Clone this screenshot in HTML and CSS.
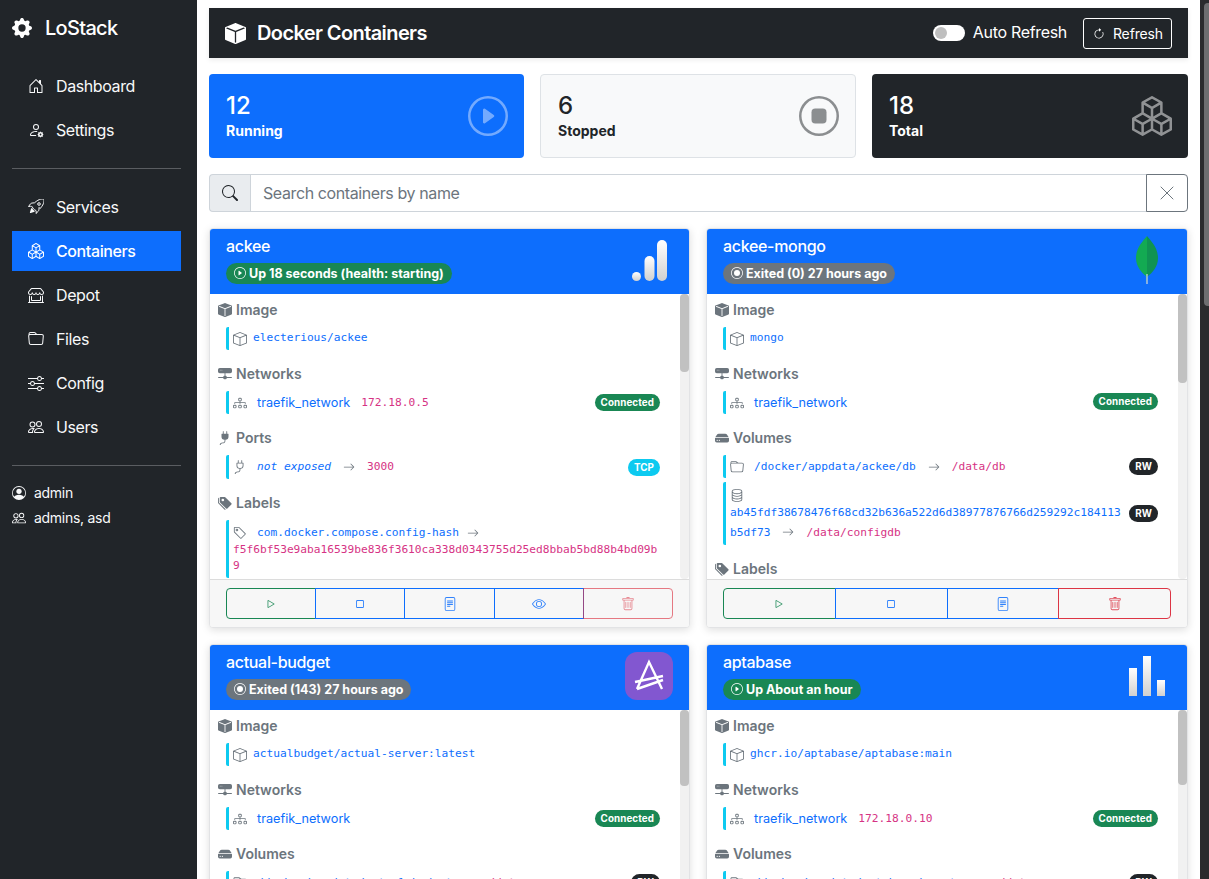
FILE: index.html
```html
<!DOCTYPE html>
<html lang="en">
<head>
<meta charset="utf-8">
<title>LoStack - Docker Containers</title>
<link rel="stylesheet" href="styles.css">
</head>
<body>
<svg class="defs" width="0" height="0" aria-hidden="true">
<defs>
<symbol id="i-box" viewBox="0 0 16 16"><path fill="currentColor" d="M8.186 1.113a.5.5 0 0 0-.372 0L1.846 3.5 8 5.961 14.154 3.5 8.186 1.113zM15 4.239l-6.5 2.6v7.922l6.5-2.6V4.24zM7.5 14.762V6.838L1 4.239v7.925l6.5 2.6zM7.443.184a1.5 1.5 0 0 1 1.114 0l7.129 2.852A.5.5 0 0 1 16 3.5v8.662a1 1 0 0 1-.629.928l-7.185 2.874a.5.5 0 0 1-.372 0L.63 13.09a1 1 0 0 1-.63-.928V3.5a.5.5 0 0 1 .314-.464L7.443.184z"/></symbol>
<symbol id="i-boxfill" viewBox="0 0 16 16"><path fill="currentColor" d="M15.528 2.973a.75.75 0 0 1 .472.696v8.662a.75.75 0 0 1-.472.696l-7.25 2.9a.75.75 0 0 1-.557 0l-7.25-2.9A.75.75 0 0 1 0 12.331V3.669a.75.75 0 0 1 .471-.696L7.443.184l.004-.001.274-.11a.75.75 0 0 1 .558 0l.274.11.004.001 6.971 2.789zm-1.374.527L8 5.962 1.846 3.5 1 3.839v.4l6.5 2.6v7.922l.5.2.5-.2V6.84l6.5-2.6v-.4l-.846-.339z"/></symbol>
<symbol id="i-boxes" viewBox="0 0 16 16"><path fill="currentColor" d="M7.752.066a.5.5 0 0 1 .496 0l3.75 2.143a.5.5 0 0 1 .252.434v3.995l3.498 2A.5.5 0 0 1 16 9.07v4.286a.5.5 0 0 1-.252.434l-3.75 2.143a.5.5 0 0 1-.496 0l-3.502-2-3.502 2.001a.5.5 0 0 1-.496 0l-3.75-2.143A.5.5 0 0 1 0 13.357V9.071a.5.5 0 0 1 .252-.434L3.75 6.638V2.643a.5.5 0 0 1 .252-.434L7.752.066ZM4.25 7.504 1.508 9.071l2.742 1.567 2.742-1.567L4.25 7.504ZM7.5 9.933l-2.75 1.571v3.134l2.75-1.571V9.933Zm1 3.134 2.75 1.571v-3.134L8.5 9.933v3.134Zm.508-3.996 2.742 1.567 2.742-1.567-2.742-1.567-2.742 1.567Zm2.242-2.433V3.504L8.5 5.076V8.21l2.75-1.572ZM7.5 8.21V5.076L4.75 3.504v3.134L7.5 8.21ZM5.258 2.643 8 4.21l2.742-1.567L8 1.076 5.258 2.643ZM15 9.933l-2.75 1.571v3.134L15 13.067V9.933ZM3.75 14.638v-3.134L1 9.933v3.134l2.75 1.571Z"/></symbol>
<symbol id="i-home" viewBox="0 0 16 16"><path fill="currentColor" d="M8.354 1.146a.5.5 0 0 0-.708 0l-6 6A.5.5 0 0 0 1.5 7.5v7a.5.5 0 0 0 .5.5h4.5a.5.5 0 0 0 .5-.5v-4h2v4a.5.5 0 0 0 .5.5H14a.5.5 0 0 0 .5-.5v-7a.5.5 0 0 0-.146-.354L13 5.793V2.5a.5.5 0 0 0-.5-.5h-1a.5.5 0 0 0-.5.5v1.293L8.354 1.146zM2.5 14V7.707l5.5-5.5 5.5 5.5V14H10v-4a.5.5 0 0 0-.5-.5h-3a.5.5 0 0 0-.5.5v4H2.5z"/></symbol>
<symbol id="i-usergear" viewBox="0 0 16 16"><path fill="currentColor" d="M11 5a3 3 0 1 1-6 0 3 3 0 0 1 6 0ZM8 7a2 2 0 1 0 0-4 2 2 0 0 0 0 4Zm.256 7a4.474 4.474 0 0 1-.229-1.004H3c.001-.246.154-.986.832-1.664C4.484 10.68 5.711 10 8 10c.26 0 .507.009.74.025.226-.341.496-.65.804-.918C9.077 9.038 8.564 9 8 9c-5 0-6 3-6 4s1 1 1 1h5.256Z"/><circle cx="12.5" cy="12.5" r="1.7" fill="none" stroke="currentColor" stroke-width="1.6"/><path stroke="currentColor" stroke-width="1" d="M12.5 9.7v1.2M12.5 14.1v1.2M9.7 12.5h1.2M14.1 12.5h1.2M10.5 10.5l.8.8M13.7 13.7l.8.8M14.5 10.5l-.8.8M11.3 13.7l-.8.8"/></symbol>
<symbol id="i-rocket" viewBox="0 0 16 16"><path fill="none" stroke="currentColor" stroke-width="1" stroke-linejoin="round" d="M12.17 9.53c2.307-2.592 3.278-4.684 3.641-6.218.21-.887.214-1.58.16-2.065a3.578 3.578 0 0 0-.186-.793c-.073-.164-.168-.234-.352-.295a3.797 3.797 0 0 0-.73-.138c-.49-.044-1.19-.03-2.08.188-1.536.374-3.618 1.343-6.161 3.604l-2.4.238a2.552 2.552 0 0 0-1.53.734L.5 7.5l2-.2c.28-.04.592.013.955.132.232.076.437.16.858.331.196.816.66 1.58 1.275 2.195.613.614 1.376 1.08 2.273 1.479.089.218.173.424.249.657.118.363.172.676.132.956L8 14.5l2.144-2.099c.41-.41.668-.949.732-1.526l.24-2.408Z"/><circle cx="11" cy="5" r="1.3" fill="none" stroke="currentColor"/><path fill="currentColor" d="M5.205 10.787a7.632 7.632 0 0 0 1.804 1.352c-1.118 1.007-4.929 2.028-5.054 1.903-.126-.127.737-4.189 1.839-5.18.346.69.837 1.35 1.411 1.925Z"/></symbol>
<symbol id="i-shop" viewBox="0 0 16 16"><path fill="currentColor" d="M2.97 1.35A1 1 0 0 1 3.73 1h8.54a1 1 0 0 1 .76.35l2.609 3.044A1.5 1.5 0 0 1 16 5.37v.255a2.375 2.375 0 0 1-4.25 1.458A2.371 2.371 0 0 1 9.875 8 2.37 2.37 0 0 1 8 7.083 2.37 2.37 0 0 1 6.125 8a2.37 2.37 0 0 1-1.875-.917A2.375 2.375 0 0 1 0 5.625V5.37a1.5 1.5 0 0 1 .361-.976l2.61-3.045zm1.78 4.275a1.375 1.375 0 0 0 2.75 0 .5.5 0 0 1 1 0 1.375 1.375 0 0 0 2.75 0 .5.5 0 0 1 1 0 1.375 1.375 0 1 0 2.75 0V5.37a.5.5 0 0 0-.12-.325L12.27 2H3.73L1.12 5.045A.5.5 0 0 0 1 5.37v.255a1.375 1.375 0 0 0 2.75 0 .5.5 0 0 1 1 0zM1.5 8.5A.5.5 0 0 1 2 9v6h12V9a.5.5 0 0 1 1 0v6h.5a.5.5 0 0 1 0 1H.5a.5.5 0 0 1 0-1H1V9a.5.5 0 0 1 .5-.5zm2 .5a.5.5 0 0 1 .5.5V13h8V9.5a.5.5 0 0 1 1 0V13a1 1 0 0 1-1 1H4a1 1 0 0 1-1-1V9.5a.5.5 0 0 1 .5-.5z"/></symbol>
<symbol id="i-folder" viewBox="0 0 16 16"><path fill="currentColor" d="M.54 3.87.5 3a2 2 0 0 1 2-2h3.672a2 2 0 0 1 1.414.586l.828.828A2 2 0 0 0 9.828 3h3.982a2 2 0 0 1 1.992 2.181l-.637 7A2 2 0 0 1 13.174 14H2.826a2 2 0 0 1-1.991-1.819l-.637-7a1.99 1.99 0 0 1 .342-1.31zM2.19 4a1 1 0 0 0-.996 1.09l.637 7a1 1 0 0 0 .995.91h10.348a1 1 0 0 0 .995-.91l.637-7A1 1 0 0 0 13.81 4H2.19zm4.69-1.707A1 1 0 0 0 6.172 2H2.5a1 1 0 0 0-1 .981l.006.139C1.72 3.042 1.95 3 2.19 3h5.396l-.707-.707z"/></symbol>
<symbol id="i-sliders" viewBox="0 0 16 16"><path fill="currentColor" fill-rule="evenodd" d="M11.5 2a1.5 1.5 0 1 0 0 3 1.5 1.5 0 0 0 0-3zM9.05 3a2.5 2.5 0 0 1 4.9 0H16v1h-2.05a2.5 2.5 0 0 1-4.9 0H0V3h9.05zM4.5 7a1.5 1.5 0 1 0 0 3 1.5 1.5 0 0 0 0-3zM2.05 8a2.5 2.5 0 0 1 4.9 0H16v1H6.95a2.5 2.5 0 0 1-4.9 0H0V8h2.05zm9.45 4a1.5 1.5 0 1 0 0 3 1.5 1.5 0 0 0 0-3zm-2.45 1a2.5 2.5 0 0 1 4.9 0H16v1h-2.05a2.5 2.5 0 0 1-4.9 0H0v-1h9.05z"/></symbol>
<symbol id="i-people" viewBox="0 0 16 16"><path fill="currentColor" d="M15 14s1 0 1-1-1-4-5-4-5 3-5 4 1 1 1 1h8Zm-7.978-1A.261.261 0 0 1 7 12.996c.001-.264.167-1.03.76-1.72C8.312 10.629 9.282 10 11 10c1.717 0 2.687.63 3.24 1.276.593.69.758 1.457.76 1.72l-.008.002a.274.274 0 0 1-.014.002H7.022ZM11 7a2 2 0 1 0 0-4 2 2 0 0 0 0 4Zm3-2a3 3 0 1 1-6 0 3 3 0 0 1 6 0ZM6.936 9.28a5.88 5.88 0 0 0-1.23-.247A7.35 7.35 0 0 0 5 9c-4 0-5 3-5 4 0 .667.333 1 1 1h4.216A2.238 2.238 0 0 1 5 13c0-1.01.377-2.042 1.09-2.904.243-.294.526-.569.846-.816ZM4.92 10A5.493 5.493 0 0 0 4 13H1c0-.26.164-1.03.76-1.724.545-.636 1.492-1.256 3.16-1.275ZM1.5 5.5a3 3 0 1 1 6 0 3 3 0 0 1-6 0Zm3-2a2 2 0 1 0 0 4 2 2 0 0 0 0-4Z"/></symbol>
<symbol id="i-usercircle" viewBox="0 0 16 16"><path fill="currentColor" d="M11 6a3 3 0 1 1-6 0 3 3 0 0 1 6 0z"/><path fill="currentColor" fill-rule="evenodd" d="M0 8a8 8 0 1 1 16 0A8 8 0 0 1 0 8zm8-7a7 7 0 0 0-5.468 11.37C3.242 11.226 4.805 10 8 10s4.757 1.225 5.468 2.37A7 7 0 0 0 8 1z"/></symbol>
<symbol id="i-gear" viewBox="0 0 16 16"><path fill="currentColor" d="M9.405 1.05c-.413-1.4-2.397-1.4-2.81 0l-.1.34a1.464 1.464 0 0 1-2.105.872l-.31-.17c-1.283-.698-2.686.705-1.987 1.987l.169.311c.446.82.023 1.841-.872 2.105l-.34.1c-1.4.413-1.4 2.397 0 2.81l.34.1a1.464 1.464 0 0 1 .872 2.105l-.17.31c-.698 1.283.705 2.686 1.987 1.987l.311-.169a1.464 1.464 0 0 1 2.105.872l.1.34c.413 1.4 2.397 1.4 2.81 0l.1-.34a1.464 1.464 0 0 1 2.105-.872l.31.17c1.283.698 2.686-.705 1.987-1.987l-.169-.311a1.464 1.464 0 0 1 .872-2.105l.34-.1c1.4-.413 1.4-2.397 0-2.81l-.34-.1a1.464 1.464 0 0 1-.872-2.105l.17-.31c.698-1.283-.705-2.686-1.987-1.987l-.311.169a1.464 1.464 0 0 1-2.105-.872l-.1-.34zM8 10.93a2.929 2.929 0 1 1 0-5.86 2.929 2.929 0 0 1 0 5.858z"/></symbol>
<symbol id="i-play" viewBox="0 0 16 16"><path fill="currentColor" d="M8 15A7 7 0 1 1 8 1a7 7 0 0 1 0 14zm0 1A8 8 0 1 0 8 0a8 8 0 0 0 0 16z"/><path fill="currentColor" d="M6.271 5.055a.5.5 0 0 1 .52.038l3.5 2.5a.5.5 0 0 1 0 .814l-3.5 2.5A.5.5 0 0 1 6 10.5v-5a.5.5 0 0 1 .271-.445z"/></symbol>
<symbol id="i-stop" viewBox="0 0 16 16"><path fill="currentColor" d="M8 15A7 7 0 1 1 8 1a7 7 0 0 1 0 14zm0 1A8 8 0 1 0 8 0a8 8 0 0 0 0 16z"/><path fill="currentColor" d="M5 6.5A1.5 1.5 0 0 1 6.5 5h3A1.5 1.5 0 0 1 11 6.5v3A1.5 1.5 0 0 1 9.5 11h-3A1.5 1.5 0 0 1 5 9.5v-3z"/></symbol>
<symbol id="i-record" viewBox="0 0 16 16"><path fill="currentColor" d="M8 15A7 7 0 1 1 8 1a7 7 0 0 1 0 14zm0 1A8 8 0 1 0 8 0a8 8 0 0 0 0 16z"/><circle fill="currentColor" cx="8" cy="8" r="4"/></symbol>
<symbol id="i-refresh" viewBox="0 0 16 16"><path fill="currentColor" fill-rule="evenodd" d="M8 3a5 5 0 1 0 4.546 2.914.5.5 0 0 1 .908-.417A6 6 0 1 1 8 2v1z"/><path fill="currentColor" d="M8 4.466V.534a.25.25 0 0 1 .41-.192l2.36 1.966c.12.1.12.284 0 .384L8.41 4.658A.25.25 0 0 1 8 4.466z"/></symbol>
<symbol id="i-search" viewBox="0 0 16 16"><path fill="currentColor" d="M11.742 10.344a6.5 6.5 0 1 0-1.397 1.398h-.001c.03.04.062.078.098.115l3.85 3.85a1 1 0 0 0 1.415-1.414l-3.85-3.85a1.007 1.007 0 0 0-.115-.1zM12 6.5a5.5 5.5 0 1 1-11 0 5.5 5.5 0 0 1 11 0z"/></symbol>
<symbol id="i-x" viewBox="0 0 16 16"><path fill="none" stroke="currentColor" stroke-width="1" stroke-linecap="round" d="M2 2l12 12M14 2 2 14"/></symbol>
<symbol id="i-hdd" viewBox="0 0 16 16"><path fill="currentColor" d="M2 1a2 2 0 0 0-2 2v2a2 2 0 0 0 2 2h5.5v3A1.5 1.5 0 0 0 6 11.5H.5a.5.5 0 0 0 0 1H6A1.5 1.5 0 0 0 7.5 14h1a1.5 1.5 0 0 0 1.5-1.5h5.5a.5.5 0 0 0 0-1H10A1.5 1.5 0 0 0 8.5 10V7H14a2 2 0 0 0 2-2V3a2 2 0 0 0-2-2H2zm.5 3a.5.5 0 1 1 0-1 .5.5 0 0 1 0 1zm2 0a.5.5 0 1 1 0-1 .5.5 0 0 1 0 1z"/></symbol>
<symbol id="i-stack" viewBox="0 0 16 16"><path fill="currentColor" fill-rule="evenodd" d="M4.2 3h7.6c.6 0 1.2.3 1.6.8L15.7 7H.3l2.3-3.2c.4-.5 1-.8 1.6-.8zM.5 8h15c.3 0 .5.2.5.5V11a2 2 0 0 1-2 2H2a2 2 0 0 1-2-2V8.5C0 8.2.2 8 .5 8zm2 2a.7.7 0 1 0 0 1.4.7.7 0 0 0 0-1.4zm2.5 0a.7.7 0 1 0 0 1.4.7.7 0 0 0 0-1.4z"/></symbol>
<symbol id="i-diagram" viewBox="0 0 16 16"><path fill="currentColor" fill-rule="evenodd" d="M6 3.5A1.5 1.5 0 0 1 7.5 2h1A1.5 1.5 0 0 1 10 3.5v1A1.5 1.5 0 0 1 8.5 6v1H14a.5.5 0 0 1 .5.5v1a.5.5 0 0 1-1 0V8h-5v.5a.5.5 0 0 1-1 0V8h-5v.5a.5.5 0 0 1-1 0v-1A.5.5 0 0 1 2 7h5.5V6A1.5 1.5 0 0 1 6 4.5v-1zM8.5 5a.5.5 0 0 0 .5-.5v-1a.5.5 0 0 0-.5-.5h-1a.5.5 0 0 0-.5.5v1a.5.5 0 0 0 .5.5h1zM0 11.5A1.5 1.5 0 0 1 1.5 10h1A1.5 1.5 0 0 1 4 11.5v1A1.5 1.5 0 0 1 2.5 14h-1A1.5 1.5 0 0 1 0 12.5v-1zm1.5-.5a.5.5 0 0 0-.5.5v1a.5.5 0 0 0 .5.5h1a.5.5 0 0 0 .5-.5v-1a.5.5 0 0 0-.5-.5h-1zm4.5.5A1.5 1.5 0 0 1 7.5 10h1a1.5 1.5 0 0 1 1.5 1.5v1A1.5 1.5 0 0 1 8.5 14h-1A1.5 1.5 0 0 1 6 12.5v-1zm1.5-.5a.5.5 0 0 0-.5.5v1a.5.5 0 0 0 .5.5h1a.5.5 0 0 0 .5-.5v-1a.5.5 0 0 0-.5-.5h-1zm4.5.5a1.5 1.5 0 0 1 1.5-1.5h1a1.5 1.5 0 0 1 1.5 1.5v1a1.5 1.5 0 0 1-1.5 1.5h-1a1.5 1.5 0 0 1-1.5-1.5v-1zm1.5-.5a.5.5 0 0 0-.5.5v1a.5.5 0 0 0 .5.5h1a.5.5 0 0 0 .5-.5v-1a.5.5 0 0 0-.5-.5h-1z"/></symbol>
<symbol id="i-plugfill" viewBox="0 0 16 16"><path fill="currentColor" d="M6 0a.5.5 0 0 1 .5.5V3h3V.5a.5.5 0 0 1 1 0V3h1a.5.5 0 0 1 .5.5v3A3.5 3.5 0 0 1 8.5 10c-.002.434-.01.845-.04 1.22-.041.514-.126 1.003-.317 1.424a2.083 2.083 0 0 1-.97 1.028C6.725 13.9 6.169 14 5.5 14c-.998 0-1.61.33-1.974.718A1.922 1.922 0 0 0 3 16H2c0-.616.232-1.367.797-1.968C3.374 13.42 4.261 13 5.5 13c.581 0 .962-.088 1.218-.219.241-.123.4-.3.514-.55.121-.266.193-.621.23-1.09.027-.34.035-.718.037-1.141A3.5 3.5 0 0 1 4 6.5v-3a.5.5 0 0 1 .5-.5h1V.5A.5.5 0 0 1 6 0z"/></symbol>
<symbol id="i-plug" viewBox="0 0 16 16"><path fill="currentColor" fill-rule="evenodd" d="M6 0a.5.5 0 0 1 .5.5V3h3V.5a.5.5 0 0 1 1 0V3h1a.5.5 0 0 1 .5.5v3A3.5 3.5 0 0 1 8.5 10c-.002.434-.01.845-.04 1.22-.041.514-.126 1.003-.317 1.424a2.083 2.083 0 0 1-.97 1.028C6.725 13.9 6.169 14 5.5 14c-.998 0-1.61.33-1.974.718A1.922 1.922 0 0 0 3 16H2c0-.616.232-1.367.797-1.968C3.374 13.42 4.261 13 5.5 13c.581 0 .962-.088 1.218-.219.241-.123.4-.3.514-.55.121-.266.193-.621.23-1.09.027-.34.035-.718.037-1.141A3.5 3.5 0 0 1 4 6.5v-3a.5.5 0 0 1 .5-.5h1V.5A.5.5 0 0 1 6 0zM5 4v2.5A2.5 2.5 0 0 0 7.5 9h1A2.5 2.5 0 0 0 11 6.5V4H5z"/></symbol>
<symbol id="i-tagsfill" viewBox="0 0 16 16"><path fill="currentColor" d="M2 2a1 1 0 0 1 1-1h4.586a1 1 0 0 1 .707.293l7 7a1 1 0 0 1 0 1.414l-4.586 4.586a1 1 0 0 1-1.414 0l-7-7A1 1 0 0 1 2 6.586V2zm3.5 4a1.5 1.5 0 1 0 0-3 1.5 1.5 0 0 0 0 3z"/><path fill="currentColor" d="M1.293 7.793A1 1 0 0 1 1 7.086V2a1 1 0 0 0-1 1v4.586a1 1 0 0 0 .293.707l7 7a1 1 0 0 0 1.414 0l.043-.043-7.457-7.457z"/></symbol>
<symbol id="i-tag" viewBox="0 0 16 16"><path fill="currentColor" d="M6 4.5a1.5 1.5 0 1 1-3 0 1.5 1.5 0 0 1 3 0zm-1 0a.5.5 0 1 0-1 0 .5.5 0 0 0 1 0z"/><path fill="currentColor" d="M2 1h4.586a1 1 0 0 1 .707.293l7 7a1 1 0 0 1 0 1.414l-4.586 4.586a1 1 0 0 1-1.414 0l-7-7A1 1 0 0 1 1 6.586V2a1 1 0 0 1 1-1zm0 5.586 7 7L13.586 9l-7-7H2v4.586z"/></symbol>
<symbol id="i-db" viewBox="0 0 16 16"><path fill="currentColor" d="M4.318 2.687C5.234 2.271 6.536 2 8 2s2.766.27 3.682.687C12.644 3.125 13 3.627 13 4c0 .374-.356.875-1.318 1.313C10.766 5.729 9.464 6 8 6s-2.766-.27-3.682-.687C3.356 4.875 3 4.373 3 4c0-.374.356-.875 1.318-1.313ZM13 5.698V7c0 .374-.356.875-1.318 1.313C10.766 8.729 9.464 9 8 9s-2.766-.27-3.682-.687C3.356 7.875 3 7.373 3 7V5.698c.271.202.58.378.904.525C4.978 6.711 6.427 7 8 7s3.022-.289 4.096-.777A4.92 4.92 0 0 0 13 5.698ZM14 4c0-1.007-.875-1.755-1.904-2.223C11.022 1.289 9.573 1 8 1s-3.022.289-4.096.777C2.875 2.245 2 2.993 2 4v9c0 1.007.875 1.755 1.904 2.223C4.978 15.71 6.427 16 8 16s3.022-.289 4.096-.777C13.125 14.755 14 14.007 14 13V4Zm-1 4.698V10c0 .374-.356.875-1.318 1.313C10.766 11.729 9.464 12 8 12s-2.766-.27-3.682-.687C3.356 10.875 3 10.373 3 10V8.698c.271.202.58.378.904.525C4.978 9.71 6.427 10 8 10s3.022-.289 4.096-.777A4.92 4.92 0 0 0 13 8.698Zm0 3V13c0 .374-.356.875-1.318 1.313C10.766 14.729 9.464 15 8 15s-2.766-.27-3.682-.687C3.356 13.875 3 13.373 3 13v-1.302c.271.202.58.378.904.525C4.978 12.71 6.427 13 8 13s3.022-.289 4.096-.777c.324-.147.633-.323.904-.525Z"/></symbol>
<symbol id="i-arrow" viewBox="0 0 16 16"><path fill="currentColor" fill-rule="evenodd" d="M1 8a.5.5 0 0 1 .5-.5h11.793l-3.147-3.146a.5.5 0 0 1 .708-.708l4 4a.5.5 0 0 1 0 .708l-4 4a.5.5 0 0 1-.708-.708L13.293 8.5H1.5A.5.5 0 0 1 1 8z"/></symbol>
<symbol id="i-btnplay" viewBox="0 0 16 16"><path fill="currentColor" d="M10.804 8 5 4.633v6.734L10.804 8zm.792-.696a.802.802 0 0 1 0 1.392l-6.363 3.692C4.713 12.69 4 12.345 4 11.692V4.308c0-.653.713-.998 1.233-.696l6.363 3.692z"/></symbol>
<symbol id="i-btnstop" viewBox="0 0 16 16"><path fill="currentColor" d="M3.5 5A1.5 1.5 0 0 1 5 3.5h6A1.5 1.5 0 0 1 12.5 5v6a1.5 1.5 0 0 1-1.5 1.5H5A1.5 1.5 0 0 1 3.5 11V5zM5 4.5a.5.5 0 0 0-.5.5v6a.5.5 0 0 0 .5.5h6a.5.5 0 0 0 .5-.5V5a.5.5 0 0 0-.5-.5H5z"/></symbol>
<symbol id="i-doc" viewBox="0 0 16 16"><path fill="currentColor" d="M5 4a.5.5 0 0 0 0 1h6a.5.5 0 0 0 0-1H5zm-.5 2.5A.5.5 0 0 1 5 6h6a.5.5 0 0 1 0 1H5a.5.5 0 0 1-.5-.5zM5 8a.5.5 0 0 0 0 1h6a.5.5 0 0 0 0-1H5zm0 2a.5.5 0 0 0 0 1h3a.5.5 0 0 0 0-1H5z"/><path fill="currentColor" d="M2 2a2 2 0 0 1 2-2h8a2 2 0 0 1 2 2v12a2 2 0 0 1-2 2H4a2 2 0 0 1-2-2V2zm10-1H4a1 1 0 0 0-1 1v12a1 1 0 0 0 1 1h8a1 1 0 0 0 1-1V2a1 1 0 0 0-1-1z"/></symbol>
<symbol id="i-eye" viewBox="0 0 16 16"><path fill="currentColor" d="M16 8s-3-5.5-8-5.5S0 8 0 8s3 5.5 8 5.5S16 8 16 8zM1.173 8a13.133 13.133 0 0 1 1.66-2.043C4.12 4.668 5.88 3.5 8 3.5c2.12 0 3.879 1.168 5.168 2.457A13.133 13.133 0 0 1 14.828 8c-.058.087-.122.183-.195.288-.335.48-.83 1.12-1.465 1.755C11.879 11.332 10.119 12.5 8 12.5c-2.12 0-3.879-1.168-5.168-2.457A13.134 13.134 0 0 1 1.172 8z"/><path fill="currentColor" d="M8 5.5a2.5 2.5 0 1 0 0 5 2.5 2.5 0 0 0 0-5zM4.5 8a3.5 3.5 0 1 1 7 0 3.5 3.5 0 0 1-7 0z"/></symbol>
<symbol id="i-trash" viewBox="0 0 16 16"><path fill="currentColor" d="M5.5 5.5A.5.5 0 0 1 6 6v6a.5.5 0 0 1-1 0V6a.5.5 0 0 1 .5-.5zm2.5 0a.5.5 0 0 1 .5.5v6a.5.5 0 0 1-1 0V6a.5.5 0 0 1 .5-.5zm3 .5a.5.5 0 0 0-1 0v6a.5.5 0 0 0 1 0V6z"/><path fill="currentColor" fill-rule="evenodd" d="M14.5 3a1 1 0 0 1-1 1H13v9a2 2 0 0 1-2 2H5a2 2 0 0 1-2-2V4h-.5a1 1 0 0 1-1-1V2a1 1 0 0 1 1-1H6a1 1 0 0 1 1-1h2a1 1 0 0 1 1 1h3.5a1 1 0 0 1 1 1v1zM4.118 4 4 4.059V13a1 1 0 0 0 1 1h6a1 1 0 0 0 1-1V4.059L11.882 4H4.118zM2.5 3V2h11v1h-11z"/></symbol>
<linearGradient id="g1" x1="0" y1="0" x2="0" y2="1"><stop offset="0" stop-color="#fff"/><stop offset="1" stop-color="#d0d0d0"/></linearGradient>
</defs>
</svg>

<div class="app">
  <aside class="sidebar">
    <div class="brand"><svg class="brand-icon"><use href="#i-gear"/></svg><span>LoStack</span></div>
    <nav class="nav">
      <a class="nav-link"><svg class="nav-icon"><use href="#i-home"/></svg>Dashboard</a>
      <a class="nav-link"><svg class="nav-icon"><use href="#i-usergear"/></svg>Settings</a>
    </nav>
    <hr class="side-rule">
    <nav class="nav">
      <a class="nav-link"><svg class="nav-icon"><use href="#i-rocket"/></svg>Services</a>
      <a class="nav-link active"><svg class="nav-icon"><use href="#i-boxes"/></svg>Containers</a>
      <a class="nav-link"><svg class="nav-icon"><use href="#i-shop"/></svg>Depot</a>
      <a class="nav-link"><svg class="nav-icon"><use href="#i-folder"/></svg>Files</a>
      <a class="nav-link"><svg class="nav-icon"><use href="#i-sliders"/></svg>Config</a>
      <a class="nav-link"><svg class="nav-icon"><use href="#i-people"/></svg>Users</a>
    </nav>
    <hr class="side-rule side-rule-low">
    <div class="who"><svg class="who-icon"><use href="#i-usercircle"/></svg>admin</div>
    <div class="who"><svg class="who-icon"><use href="#i-people"/></svg>admins, asd</div>
  </aside>

  <main class="main">
    <header class="topbar">
      <h1 class="title"><svg class="title-icon"><use href="#i-boxfill"/></svg>Docker Containers</h1>
      <div class="top-actions">
        <span class="switch"><span class="knob"></span></span>
        <span class="auto-label">Auto Refresh</span>
        <button class="refresh"><svg class="refresh-icon"><use href="#i-refresh"/></svg>Refresh</button>
      </div>
    </header>

    <section class="stats">
      <div class="stat stat-blue"><div><div class="num">12</div><div class="cap">Running</div></div><svg class="stat-icon"><use href="#i-play"/></svg></div>
      <div class="stat stat-light"><div><div class="num">6</div><div class="cap">Stopped</div></div><svg class="stat-icon"><use href="#i-stop"/></svg></div>
      <div class="stat stat-dark"><div><div class="num">18</div><div class="cap">Total</div></div><svg class="stat-icon"><use href="#i-boxes"/></svg></div>
    </section>

    <div class="search">
      <span class="search-addon"><svg class="search-icon"><use href="#i-search"/></svg></span>
      <input class="search-input" placeholder="Search containers by name">
      <button class="search-clear"><svg class="clear-icon"><use href="#i-x"/></svg></button>
    </div>

    <section class="cards">
      <article class="card">
        <div class="card-head">
          <div><div class="card-name">ackee</div><span class="state state-up"><svg class="state-icon"><use href="#i-play"/></svg>Up 18 seconds (health: starting)</span></div>
          <svg class="logo logo-ackee" viewBox="0 0 35 41"><rect x="25" y="0" width="10" height="41" rx="5" fill="url(#g1)"/><rect x="12.5" y="16" width="10" height="25" rx="5" fill="url(#g1)"/><circle cx="4.5" cy="36.5" r="4.5" fill="url(#g1)"/></svg>
        </div>
        <div class="card-body">
          <div class="card-scroll">
            <h2 class="sec"><svg class="sec-icon"><use href="#i-boxfill"/></svg>Image</h2>
            <div class="item"><svg class="item-icon"><use href="#i-box"/></svg><code class="mono link image-ref">electerious/ackee</code></div>
            <h2 class="sec"><svg class="sec-icon"><use href="#i-hdd"/></svg>Networks</h2>
            <div class="item"><svg class="item-icon"><use href="#i-diagram"/></svg><span class="net">traefik_network</span><code class="mono pink ip">172.18.0.5</code><span class="pill pill-green">Connected</span></div>
            <h2 class="sec"><svg class="sec-icon"><use href="#i-plugfill"/></svg>Ports</h2>
            <div class="item item-tall"><svg class="item-icon"><use href="#i-plug"/></svg><code class="mono link spaced"><i>not exposed</i></code><svg class="arrow"><use href="#i-arrow"/></svg><code class="mono pink">3000</code><span class="pill pill-cyan">TCP</span></div>
            <h2 class="sec"><svg class="sec-icon"><use href="#i-tagsfill"/></svg>Labels</h2>
            <div class="item item-wrap"><div class="wrap-line"><svg class="item-icon"><use href="#i-tag"/></svg><code class="mono link spaced">com.docker.compose.config-hash</code><svg class="arrow arrow-tight"><use href="#i-arrow"/></svg></div><code class="mono pink hash">f5f6bf53e9aba16539be836f3610ca338d0343755d25ed8bbab5bd88b4bd09b9</code></div>
          </div>
          <div class="rail"><div class="thumb thumb-a"></div></div>
        </div>
        <div class="card-foot">
          <div class="btns">
            <button class="btn btn-green"><svg class="btn-icon"><use href="#i-btnplay"/></svg></button>
            <button class="btn btn-blue"><svg class="btn-icon"><use href="#i-btnstop"/></svg></button>
            <button class="btn btn-blue"><svg class="btn-icon"><use href="#i-doc"/></svg></button>
            <button class="btn btn-blue"><svg class="btn-icon"><use href="#i-eye"/></svg></button>
            <button class="btn btn-red btn-faded"><svg class="btn-icon"><use href="#i-trash"/></svg></button>
          </div>
        </div>
      </article>

      <article class="card">
        <div class="card-head">
          <div><div class="card-name">ackee-mongo</div><span class="state state-off"><svg class="state-icon"><use href="#i-record"/></svg>Exited (0) 27 hours ago</span></div>
          <svg class="logo logo-mongo" viewBox="0 0 24 48"><path fill="#13aa52" d="M12 0C9 4 1 11 1 22c0 9 6 15 10 18l1 8z"/><path fill="#109351" d="M12 0c3 4 11 11 11 22 0 9-6 15-10 18l-1 1z"/><path fill="#d9d9d9" d="M11.4 38h1.2v10h-1.2z"/></svg>
        </div>
        <div class="card-body">
          <div class="card-scroll">
            <h2 class="sec"><svg class="sec-icon"><use href="#i-boxfill"/></svg>Image</h2>
            <div class="item"><svg class="item-icon"><use href="#i-box"/></svg><code class="mono link image-ref">mongo</code></div>
            <h2 class="sec"><svg class="sec-icon"><use href="#i-hdd"/></svg>Networks</h2>
            <div class="item"><svg class="item-icon"><use href="#i-diagram"/></svg><span class="net">traefik_network</span><span class="pill pill-green pill-raised">Connected</span></div>
            <h2 class="sec"><svg class="sec-icon"><use href="#i-stack"/></svg>Volumes</h2>
            <div class="item"><svg class="item-icon"><use href="#i-folder"/></svg><code class="mono link spaced">/docker/appdata/ackee/db</code><svg class="arrow"><use href="#i-arrow"/></svg><code class="mono pink">/data/db</code><span class="pill pill-dark">RW</span></div>
            <div class="item item-wrap item-vol"><svg class="item-icon item-icon-db"><use href="#i-db"/></svg><div class="vol-line"><code class="mono link vol-hash">ab45fdf38678476f68cd32b636a522d6d38977876766d259292c184113b5df73<svg class="arrow arrow-inline"><use href="#i-arrow"/></svg><span class="pink">/data/configdb</span></code><span class="pill pill-dark">RW</span></div></div>
            <h2 class="sec"><svg class="sec-icon"><use href="#i-tagsfill"/></svg>Labels</h2>
          </div>
          <div class="rail"><div class="thumb thumb-b"></div></div>
        </div>
        <div class="card-foot">
          <div class="btns">
            <button class="btn btn-green"><svg class="btn-icon"><use href="#i-btnplay"/></svg></button>
            <button class="btn btn-blue"><svg class="btn-icon"><use href="#i-btnstop"/></svg></button>
            <button class="btn btn-blue"><svg class="btn-icon"><use href="#i-doc"/></svg></button>
            <button class="btn btn-red"><svg class="btn-icon"><use href="#i-trash"/></svg></button>
          </div>
        </div>
      </article>

      <article class="card">
        <div class="card-head">
          <div><div class="card-name">actual-budget</div><span class="state state-off"><svg class="state-icon"><use href="#i-record"/></svg>Exited (143) 27 hours ago</span></div>
          <svg class="logo logo-actual" viewBox="0 0 48 48"><rect width="48" height="48" rx="12" fill="#8257d0"/><path fill="none" stroke="#fff" stroke-width="2.4" d="M12 37 24 10l13 27M10 30l28-6M12 37l26-9"/></svg>
        </div>
        <div class="card-body">
          <div class="card-scroll">
            <h2 class="sec"><svg class="sec-icon"><use href="#i-boxfill"/></svg>Image</h2>
            <div class="item"><svg class="item-icon"><use href="#i-box"/></svg><code class="mono link image-ref">actualbudget/actual-server:latest</code></div>
            <h2 class="sec"><svg class="sec-icon"><use href="#i-hdd"/></svg>Networks</h2>
            <div class="item"><svg class="item-icon"><use href="#i-diagram"/></svg><span class="net">traefik_network</span><span class="pill pill-green">Connected</span></div>
            <h2 class="sec"><svg class="sec-icon"><use href="#i-stack"/></svg>Volumes</h2>
            <div class="item"><svg class="item-icon"><use href="#i-folder"/></svg><code class="mono link spaced">/docker/appdata/actual-budget</code><svg class="arrow"><use href="#i-arrow"/></svg><code class="mono pink">/data</code><span class="pill pill-dark">RW</span></div>
          </div>
          <div class="rail"><div class="thumb thumb-c"></div></div>
        </div>
        <div class="card-foot">
          <div class="btns">
            <button class="btn btn-green"><svg class="btn-icon"><use href="#i-btnplay"/></svg></button>
            <button class="btn btn-blue"><svg class="btn-icon"><use href="#i-btnstop"/></svg></button>
            <button class="btn btn-blue"><svg class="btn-icon"><use href="#i-doc"/></svg></button>
            <button class="btn btn-red"><svg class="btn-icon"><use href="#i-trash"/></svg></button>
          </div>
        </div>
      </article>

      <article class="card">
        <div class="card-head">
          <div><div class="card-name">aptabase</div><span class="state state-up"><svg class="state-icon"><use href="#i-play"/></svg>Up About an hour</span></div>
          <svg class="logo logo-apta" viewBox="0 0 36 40"><rect x="0" y="12" width="8" height="28" fill="url(#g1)"/><rect x="14" y="0" width="8" height="40" fill="url(#g1)"/><rect x="28" y="24" width="8" height="16" fill="url(#g1)"/></svg>
        </div>
        <div class="card-body">
          <div class="card-scroll">
            <h2 class="sec"><svg class="sec-icon"><use href="#i-boxfill"/></svg>Image</h2>
            <div class="item"><svg class="item-icon"><use href="#i-box"/></svg><code class="mono link image-ref">ghcr.io/aptabase/aptabase:main</code></div>
            <h2 class="sec"><svg class="sec-icon"><use href="#i-hdd"/></svg>Networks</h2>
            <div class="item"><svg class="item-icon"><use href="#i-diagram"/></svg><span class="net">traefik_network</span><code class="mono pink ip">172.18.0.10</code><span class="pill pill-green">Connected</span></div>
            <h2 class="sec"><svg class="sec-icon"><use href="#i-stack"/></svg>Volumes</h2>
            <div class="item"><svg class="item-icon"><use href="#i-folder"/></svg><code class="mono link spaced">/docker/appdata/aptabase/events</code><svg class="arrow"><use href="#i-arrow"/></svg><code class="mono pink">/data</code><span class="pill pill-dark">RW</span></div>
          </div>
          <div class="rail"><div class="thumb thumb-d"></div></div>
        </div>
        <div class="card-foot">
          <div class="btns">
            <button class="btn btn-green"><svg class="btn-icon"><use href="#i-btnplay"/></svg></button>
            <button class="btn btn-blue"><svg class="btn-icon"><use href="#i-btnstop"/></svg></button>
            <button class="btn btn-blue"><svg class="btn-icon"><use href="#i-doc"/></svg></button>
            <button class="btn btn-red"><svg class="btn-icon"><use href="#i-trash"/></svg></button>
          </div>
        </div>
      </article>
    </section>
  </main>
  <div class="page-rail"><div class="page-thumb"></div></div>
</div>
</body>
</html>
```

FILE: styles.css
```css
* { box-sizing: border-box; }
html, body { height: 100%; margin: 0; overflow: hidden; }
body { font-family: Inter, "Liberation Sans", sans-serif; font-size: 16px; color: #212529; background: #fff; }
.defs { position: absolute; }
.app { display: flex; height: 100vh; }

.sidebar { width: 197px; flex: none; background: #212529; color: #f8f9fa; padding: 12px 16px 12px 12px; letter-spacing: -.025em; }
.brand { display: flex; align-items: center; height: 32px; font-size: 20px; font-weight: 500; color: #fff; letter-spacing: -.035em; }
.brand-icon { width: 20px; height: 20px; margin-right: 13px; }
.nav { display: flex; flex-direction: column; gap: 4px; }
.brand + .nav { margin-top: 22px; }
.nav-link { display: flex; align-items: center; height: 40px; padding-left: 16px; font-size: 16px; color: #f8f9fa; }
.nav-link.active { background: #0d6efd; color: #fff; font-weight: 500; }
.nav-icon { width: 16px; height: 16px; margin-right: 12px; flex: none; }
.side-rule { border: 0; border-top: 1px solid #5a5d61; margin: 18px 0; }
.side-rule-low { margin: 18px 0 14px; }
.who { display: flex; align-items: center; font-size: 14px; height: 25px; letter-spacing: -.02em; }
.who-icon { width: 14px; height: 14px; margin-right: 8px; flex: none; }

.main { flex: 1; min-width: 0; height: 100vh; overflow: hidden; background: #fff; padding: 8px 12px 0; }
.page-rail { width: 9px; flex: none; height: 100vh; background: #2a2b2d; padding: 3px 0 0 4px; }
.page-thumb { height: 303px; background: #6d6e70; border-radius: 4px 0 0 4px; }

.topbar { display: flex; align-items: center; justify-content: space-between; height: 50px; background: #212529; color: #fff; padding: 0 16px; box-shadow: 0 2px 5px rgba(0,0,0,.08); }
.title { display: flex; align-items: center; margin: 0; font-size: 20px; font-weight: 600; letter-spacing: -.03em; }
.title-icon { width: 21px; height: 21px; margin-right: 11px; }
.top-actions { display: flex; align-items: center; }
.switch { display: block; width: 32px; height: 16px; border-radius: 8px; background: #fff; padding: 2px; margin-right: 8px; }
.knob { display: block; width: 12px; height: 12px; border-radius: 50%; background: #bfbfbf; }
.auto-label { font-size: 16px; margin-right: 16px; margin-bottom: 2px; letter-spacing: -.02em; }
.refresh { display: flex; align-items: center; height: 31px; padding: 1px 8px 0 9px; background: transparent; color: #fff; border: 1px solid #fff; border-radius: 3px; font: 400 14px Inter, sans-serif; letter-spacing: -.01em; }
.refresh-icon { width: 12px; height: 12px; margin-right: 8px; }

.stats { display: grid; grid-template-columns: 315fr 316fr 316fr; gap: 16px; margin-top: 16px; }
.stat { display: flex; align-items: center; justify-content: space-between; height: 84px; border-radius: 4px; padding: 0 16px 0 17px; }
.stat-blue { background: #0d6efd; color: #fff; }
.stat-light { background: #f8f9fa; color: #212529; border: 1px solid #dee2e6; padding: 0 16px 0 17px; }
.stat-dark { background: #212529; color: #fff; }
.num { font-size: 24px; font-weight: 500; line-height: 29px; }
.cap { font-size: 14px; font-weight: 700; line-height: 20px; margin-top: 1px; }
.stat-icon { width: 40px; height: 40px; opacity: .5; }
.stat-blue .stat-icon { color: #c8dcff; opacity: .55; }

.search { display: flex; height: 38px; margin-top: 16px; }
.search-addon { display: flex; align-items: center; justify-content: center; width: 41px; flex: none; background: #e9ecef; border: 1px solid #ced4da; border-right: 0; border-radius: 4px 0 0 4px; }
.search-icon { width: 16px; height: 16px; }
.search-input { flex: 1; min-width: 0; border: 1px solid #ced4da; padding: 0 12px; font: 400 16px Inter, sans-serif; letter-spacing: -.025em; background: #fff; outline: 0; }
.search-input::placeholder { color: #6c757d; opacity: 1; }
.search-clear { display: flex; align-items: center; justify-content: center; width: 42px; flex: none; margin-left: -1px; background: #fff; border: 1px solid #6c757d; border-radius: 0 4px 4px 0; padding: 0; color: #6c757d; }
.clear-icon { width: 16px; height: 16px; }

.cards { display: grid; grid-template-columns: 481fr 482fr; gap: 16px; margin-top: 16px; }
.card { display: flex; flex-direction: column; height: 400px; background: #fff; border: 1px solid #e2e3e5; border-radius: 4px; box-shadow: 0 2px 8px rgba(0,0,0,.13); overflow: hidden; }
.card-head { display: flex; align-items: center; justify-content: space-between; flex: none; height: 65px; background: #0d6efd; color: #fff; padding: 0 16px 3px; }
.card-name { font-size: 16px; font-weight: 500; line-height: 19px; letter-spacing: -.02em; }
.state { display: inline-flex; align-items: center; height: 21px; margin-top: 7px; padding: 0 8px; border-radius: 11px; font-size: 12.5px; font-weight: 700; color: #fff; }
.state-up { background: #198754; }
.state-off { background: #6c757d; }
.state-icon { width: 12px; height: 12px; margin-right: 3px; }
.logo-ackee { width: 35px; height: 41px; margin-right: 6px; }
.logo-mongo { width: 24px; height: 48px; margin-right: 12px; }
.logo-actual { width: 48px; height: 48px; }
.logo-apta { width: 36px; height: 40px; margin-right: 6px; }

.card-body { display: flex; flex: 1; min-height: 0; background: #fff; }
.card-scroll { flex: 1; min-width: 0; overflow: hidden; padding: 8px 8px 0; }
.rail { width: 9px; flex: none; background: #f1f1f1; border-radius: 4px; }
.thumb { background: #c1c1c1; border-radius: 4px; }
.thumb-a { height: 78px; }
.thumb-b { height: 89px; }
.thumb-c { height: 76px; }
.thumb-d { height: 75px; }

.sec { display: flex; align-items: center; height: 16px; margin: 0 0 9px; font-size: 14px; font-weight: 600; color: #6c757d; line-height: 16px; }
.sec-icon { width: 14px; height: 14px; margin-right: 4px; flex: none; }
.item + .sec { margin-top: 16px; }
.item { display: flex; align-items: center; min-height: 23px; margin: 0 8px; border-left: 3px solid #0dcaf0; border-radius: 2px; padding-left: 4px; }
.item-tall { min-height: 24px; }
.item + .item { margin-top: 4px; }
.item-icon { width: 14px; height: 14px; color: #6c757d; margin-right: 6px; flex: none; }
.mono { font-family: "DejaVu Sans Mono", "Liberation Mono", monospace; font-size: 11.2px; line-height: 20px; }
.image-ref { margin-top: -2px; }
.link { color: #0d6efd; }
.pink { color: #d63384; }
.spaced { margin-left: 4px; }
.net { color: #0d6efd; font-size: 12.7px; margin-left: 4px; }
.ip { margin-left: 11px; }
.arrow { width: 12px; height: 12px; color: #6c757d; margin: 0 12px; flex: none; }
.arrow-tight { margin-left: 8px; }
.pill { display: inline-flex; align-items: center; height: 17px; margin-left: auto; margin-right: 4px; padding: 0 6px; border-radius: 9px; font-size: 9.8px; font-weight: 700; color: #fff; letter-spacing: .1px; flex: none; }
.pill-raised { position: relative; top: -1px; }
.pill-green { background: #198754; }
.pill-cyan { background: #0dcaf0; }
.pill-dark { background: #212529; }
.item-wrap { display: block; padding-bottom: 4px; }
.wrap-line { display: flex; align-items: center; height: 22px; padding-top: 3px; }
.hash { display: block; word-break: break-all; line-height: 16px; margin-right: 5px; }
.item-vol { padding-top: 6px; padding-bottom: 2px; }
.item-icon-db { display: block; margin: 0 0 1px; }
.vol-line { display: flex; align-items: flex-start; }
.vol-hash { flex: 1; min-width: 0; word-break: break-all; }
.arrow-inline { display: inline-block; vertical-align: -2px; }
.vol-line .pill { margin-left: 4px; margin-top: 2px; }

.card-foot { flex: none; height: 48px; background: #f7f7f7; border-top: 1px solid #dcdcdc; padding: 8px 16px; }
.btns { display: flex; height: 31px; }
.btn { flex: 1 1 0; display: flex; align-items: center; justify-content: center; height: 31px; padding: 0; background: transparent; border: 1px solid; margin-left: -1px; }
.btn:first-child { margin-left: 0; border-radius: 4px 0 0 4px; }
.btn:last-child { border-radius: 0 4px 4px 0; }
.btn-green { border-color: #198754; color: #198754; }
.btn-blue { border-color: #0d6efd; color: #0d6efd; }
.btn-red { border-color: #dc3545; color: #dc3545; }
.btn-faded { opacity: .65; }
.btn-icon { width: 14px; height: 14px; opacity: .85; }
```
